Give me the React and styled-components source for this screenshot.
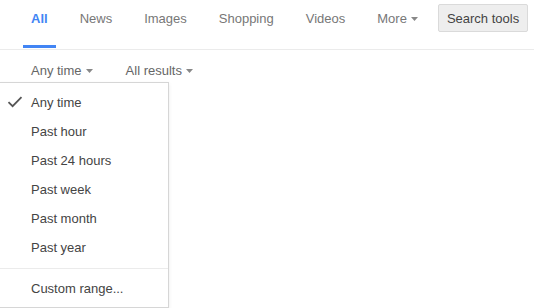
import React from 'react';
import styled, { createGlobalStyle } from 'styled-components';

const GlobalStyle = createGlobalStyle`
  body {
    margin: 0;
    background: #fff;
    font-family: "Liberation Sans", Arial, sans-serif;
    font-size: 13px;
  }
`

const tabs = ['All', 'News', 'Images', 'Shopping', 'Videos']
const times = ['Any time', 'Past hour', 'Past 24 hours', 'Past week', 'Past month', 'Past year']

const Arrow = () => (
    <ArrowSvg width="7" height="4" viewBox="0 0 7 4">
        <path d="M0 0 L7 0 L3.5 4 Z" fill="currentColor" />
    </ArrowSvg>
)

const Check = () => (
    <CheckSvg width="16" height="12" viewBox="0 0 16 12">
        <path d="M1.5 6.2 L5.6 10.2 L14.5 1.2" fill="none" stroke="#555" strokeWidth="1.8" />
    </CheckSvg>
)

const App = () => {
    return (
        <Page>
            <GlobalStyle />
            <Header>
                {tabs.map((t, i) => (
                    <Tab key={t} active={i === 0}>{t}</Tab>
                ))}
                <Tab>More <Arrow /></Tab>
                <ToolsButton>Search tools</ToolsButton>
            </Header>
            <ToolsRow>
                <ToolItem>Any time <Arrow /></ToolItem>
                <ToolItem>All results <Arrow /></ToolItem>
            </ToolsRow>
            <Menu>
                {times.map((t, i) => (
                    <MenuItem key={t}>
                        {i === 0 && <Check />}
                        {t}
                    </MenuItem>
                ))}
                <Divider />
                <MenuItem>Custom range...</MenuItem>
            </Menu>
        </Page>
    )
}

const Page = styled.div`
  position: relative;
  height: 308px;
  overflow: hidden;
`
const Header = styled.div`
  display: flex;
  align-items: flex-start;
  gap: 16px;
  height: 50px;
  box-sizing: border-box;
  padding: 0 7px 0 23px;
  border-bottom: 1px solid #ebebeb;
`
const Tab = styled.div`
  display: flex;
  align-items: flex-start;
  gap: 4px;
  height: 48px;
  box-sizing: border-box;
  padding: 11px 8px 0;
  line-height: 16px;
  white-space: nowrap;
  color: ${(props) => (props.active ? '#4285f4' : '#777')};
  font-weight: ${(props) => (props.active ? 'bold' : 'normal')};
  border-bottom: 3px solid ${(props) => (props.active ? '#4285f4' : 'transparent')};
`
const ArrowSvg = styled.svg`
  display: inline-block;
  color: #888;
  margin-top: 6px;
`
const ToolsButton = styled.button`
  flex-shrink: 0;
  white-space: nowrap;
  margin: 4px 0 0 -4px;
  height: 28px;
  padding: 0 8px;
  font-family: inherit;
  font-size: 13px;
  color: #444;
  background: #eee;
  border: 1px solid #dadada;
  border-radius: 2px;
`
const ToolsRow = styled.div`
  display: flex;
  gap: 33px;
  padding: 13px 0 0 31px;
`
const ToolItem = styled.div`
  display: flex;
  align-items: flex-start;
  gap: 4px;
  line-height: 16px;
  color: #666;
`
const Menu = styled.div`
  position: absolute;
  top: 82px;
  left: -1px;
  width: 170px;
  height: 226px;
  box-sizing: border-box;
  padding-top: 5px;
  background: #fff;
  border: 1px solid #d6d6d6;
  box-shadow: 0 2px 4px rgba(0, 0, 0, 0.08);
`
const MenuItem = styled.div`
  position: relative;
  height: 29px;
  line-height: 29px;
  padding-left: 31px;
  color: #444;
`
const CheckSvg = styled.svg`
  position: absolute;
  left: 7px;
  top: 8px;
`
const Divider = styled.div`
  height: 1px;
  margin: 6px 0 5px;
  background: #ebebeb;
`

export default App;
